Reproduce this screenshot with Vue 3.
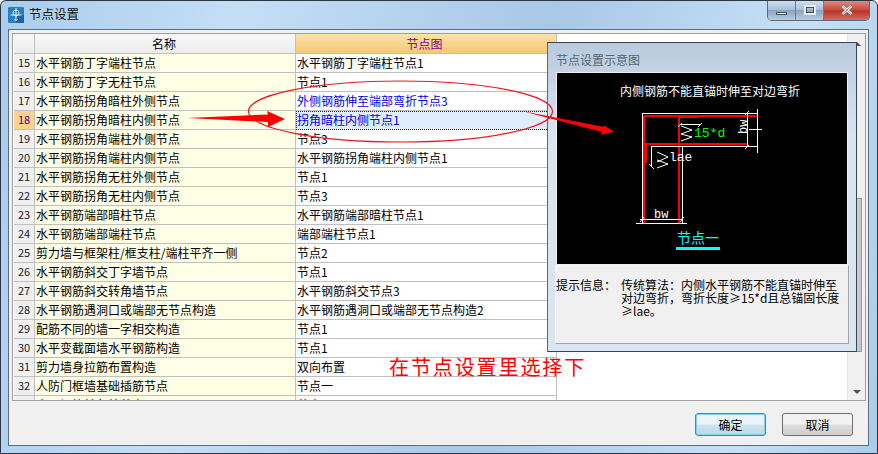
<template>
  <div class="window">
    <div class="titlebar">
      <svg class="logo" width="16" height="16" viewBox="0 0 16 16">
        <rect width="16" height="16" rx="1" fill="#2a7fc0" />
        <rect x="8" y="8" width="8" height="8" fill="#1c62a6" />
        <circle cx="8" cy="6" r="3" fill="none" stroke="#d8eefc" stroke-width="1" />
        <path d="M8 1v13M2.5 8h11M6 12l2 2 2-2" fill="none" stroke="#e8f6ff" stroke-width="1" />
      </svg>
      <span class="title">节点设置</span>
      <div class="controls">
        <div class="ctl"><i class="min"></i></div>
        <div class="ctl"><i class="max"></i></div>
        <div class="ctl close">
          <svg width="12" height="10" viewBox="0 0 12 10">
            <path d="M1.5 1l9 8M10.5 1l-9 8" stroke="#fff" stroke-width="2.6" />
            <path d="M1.5 1l9 8M10.5 1l-9 8" stroke="#5a6068" stroke-width=".6" />
          </svg>
        </div>
      </div>
    </div>

    <div class="client">
      <div class="grid">
        <div class="row head">
          <div class="num"></div>
          <div class="name">名称</div>
          <div class="node">节点图</div>
        </div>
        <div v-for="r in rows" :key="r.id" class="row" :class="{ current: r.sel }">
          <div class="num">{{ r.id }}</div>
          <div class="name">{{ r.name }}</div>
          <div class="node" :class="{ blue: r.blue }"><span>{{ r.node }}</span></div>
        </div>
        <div class="scrollbar">
          <i class="up"></i>
          <div class="thumb"></div>
          <i class="down"></i>
        </div>
      </div>
      <div class="footer">
        <button class="btn default">确定</button>
        <button class="btn">取消</button>
      </div>
    </div>

    <div class="panel">
      <div class="panel-title">节点设置示意图</div>
      <svg class="drawing" viewBox="557 72 290 191" width="290" height="191">
        <rect x="557" y="72" width="290" height="191" fill="#000" />
        <text x="710" y="95" class="cad-title" text-anchor="middle">内侧钢筋不能直锚时伸至对边弯折</text>
        <g stroke="#f00" fill="none" shape-rendering="crispEdges">
          <path d="M644 115H757M644 115V222M679 115V222M645 143H747" stroke-width="2" />
          <path d="M679 115.5H699" stroke-width="3" />
          <path d="M645 143V162" stroke-width="4" />
        </g>
        <g stroke="#fff" fill="none" stroke-width="1" shape-rendering="crispEdges">
          <path d="M642.5 112.5H757.5M642.5 112V223M636 222.5H687M651.5 145.5H757M682.5 145V222M757.5 108V152M747.5 112V146M640 218.5H683M651.5 145V165" />
          <path d="M680 123.5H700" />
          <path d="M749 128.5H762" />
        </g>
        <g stroke="#fff" fill="none" stroke-width="1">
          <path d="M678 126l4-4M698 126l4-4M745 114l4-4M745 148l4-4M640 221l4-5M680 221l4-5M649 163l5 5M657 151l11 5-11 5M657 159l11 4-11 4M681 125l11 4-11 4M681 133l11 3-11 4" />
        </g>
        <text x="694" y="136" class="cad green">15*d</text>
        <text x="669" y="160" class="cad">lae</text>
        <text x="654" y="217" class="cad small">bw</text>
        <text x="0" y="0" class="cad small" transform="translate(747 133) rotate(-90)">bw</text>
        <text x="677" y="242" class="cad-node">节点一</text>
        <rect x="676" y="246" width="44" height="3" fill="#0ff" />
      </svg>
      <div class="info">
        <div class="info-label">提示信息&#xFF1A;</div>
        <div class="info-text">传统算法&#xFF1A;内侧水平钢筋不能直锚时伸至<br />对边弯折&#xFF0C;弯折长度≥15*d且总锚固长度<br />≥lae。</div>
      </div>
    </div>

    <svg class="marks" width="878" height="454" viewBox="0 0 878 454">
      <ellipse cx="400.5" cy="111.5" rx="152" ry="30.5" fill="none" stroke="#f01820" stroke-width="1.2" />
      <path d="M187 118L268 114.5L267 111L285 119L268 127L268 122Z" fill="#f00" />
      <path d="M522 111L604 127L603 125L614 131.5L601 135L602 132Z" fill="#f00" />
    </svg>
    <div class="note">在节点设置里选择下</div>
  </div>
</template>

<script setup>
const rows = [
  { id: 15, name: '水平钢筋丁字端柱节点', node: '水平钢筋丁字端柱节点1' },
  { id: 16, name: '水平钢筋丁字无柱节点', node: '节点1' },
  { id: 17, name: '水平钢筋拐角暗柱外侧节点', node: '外侧钢筋伸至端部弯折节点3', blue: true },
  { id: 18, name: '水平钢筋拐角暗柱内侧节点', node: '拐角暗柱内侧节点1', blue: true, sel: true },
  { id: 19, name: '水平钢筋拐角端柱外侧节点', node: '节点3' },
  { id: 20, name: '水平钢筋拐角端柱内侧节点', node: '水平钢筋拐角端柱内侧节点1' },
  { id: 21, name: '水平钢筋拐角无柱外侧节点', node: '节点1' },
  { id: 22, name: '水平钢筋拐角无柱内侧节点', node: '节点3' },
  { id: 23, name: '水平钢筋端部暗柱节点', node: '水平钢筋端部暗柱节点1' },
  { id: 24, name: '水平钢筋端部端柱节点', node: '端部端柱节点1' },
  { id: 25, name: '剪力墙与框架柱/框支柱/端柱平齐一侧', node: '节点2' },
  { id: 26, name: '水平钢筋斜交丁字墙节点', node: '节点1' },
  { id: 27, name: '水平钢筋斜交转角墙节点', node: '水平钢筋斜交节点3' },
  { id: 28, name: '水平钢筋遇洞口或端部无节点构造', node: '水平钢筋遇洞口或端部无节点构造2' },
  { id: 29, name: '配筋不同的墙一字相交构造', node: '节点1' },
  { id: 30, name: '水平变截面墙水平钢筋构造', node: '节点1' },
  { id: 31, name: '剪力墙身拉筋布置构造', node: '双向布置' },
  { id: 32, name: '人防门框墙基础插筋节点', node: '节点一' },
  { id: 33, name: '水平钢筋转角处节点', node: '节点1' },
]
</script>

<style>
html, body { margin: 0; overflow: hidden; }
</style>

<style scoped>
.window {
  position: relative;
  width: 878px;
  height: 454px;
  box-sizing: border-box;
  padding: 0 8px 7px 7px;
  display: flex;
  flex-direction: column;
  border: 1px solid #2c3540;
  border-radius: 6px 6px 0 0;
  background: linear-gradient(100deg, #a9cdee 0%, #c4def5 25%, #a8c8e8 58%, #c6e0f6 85%, #a9cde8 100%);
  font-family: "Noto Sans CJK SC", sans-serif;
  font-size: 12px;
  color: #000;
  overflow: hidden;
}
.titlebar {
  height: 28px;
  flex: none;
  display: flex;
  align-items: center;
  gap: 5px;
}
.title { font-size: 12.5px; color: #111; padding-bottom: 4px; }
.controls {
  position: absolute;
  top: -1px;
  right: 7px;
  display: flex;
  height: 20px;
  border: 1px solid #5a6a7c;
  border-top: none;
  border-radius: 0 0 5px 5px;
  overflow: hidden;
}
.ctl {
  width: 27px;
  display: flex;
  align-items: center;
  justify-content: center;
  background: linear-gradient(#d3e3f2, #a9c0d8 48%, #8aa5c0 52%, #b7cee2);
  border-right: 1px solid #6c7e92;
}
.ctl .min { width: 11px; height: 3px; margin-top: 6px; background: #e8eef4; border: 1px solid #45525f; box-sizing: border-box; }
.ctl .max { width: 12px; height: 10px; border: 2px solid #e8eef4; outline: 1px solid #45525f; outline-offset: -3px; box-sizing: border-box; }
.ctl.close {
  width: 45px;
  border-right: none;
  background: linear-gradient(#d9958a, #c8493d 50%, #b53328 55%, #d07060);
}
.client {
  flex: 1;
  min-height: 0;
  display: flex;
  flex-direction: column;
  background: #f0f0f0;
  border: 1px solid #5f6e7e;
  padding: 3px 2px 0 3px;
}
.grid {
  position: relative;
  height: 368px;
  flex: none;
  box-sizing: border-box;
  border: 1px solid #a0a0a0;
  padding: 0 0 0 1px;
  background: #fff;
  overflow: hidden;
}
.row {
  display: flex;
  height: 19px;
  line-height: 17px;
  box-sizing: border-box;
}
.row > div {
  box-sizing: border-box;
  border-bottom: 1px solid #c0c0c0;
  border-right: 1px solid #c0c0c0;
  white-space: nowrap;
  overflow: hidden;
}
.num {
  width: 21px;
  text-align: center;
  background: #f0f0f0;
  color: #222;
  font-size: 11px;
}
.name {
  width: 261px;
  padding-left: 1px;
  background: #ffffe6;
}
.node {
  width: 261px;
  padding-left: 1px;
}
.head { height: 20px; line-height: 19px; }
.head .num, .head .name { background: linear-gradient(#f8f8f8, #ececec); }
.head .name { text-align: center; padding: 0 2px 0 0; }
.head .node {
  text-align: center;
  padding: 0 3px 0 0;
  color: #800080;
  background: linear-gradient(#fbe3a8, #f5c878);
}
.blue { color: #0000ee; }
.current .num { background: #fdd38b; color: #4a0080; }
.current .node {
  background: #deecfc;
  border: 1px dotted #222;
  padding-left: 0;
  line-height: 16px;
}
.scrollbar {
  position: absolute;
  top: 0;
  right: 0;
  bottom: 0;
  width: 17px;
  background: #f0f0f0;
  border-left: 1px solid #e4e4e4;
}
.scrollbar .up, .scrollbar .down {
  position: absolute;
  left: 5px;
  width: 0;
  height: 0;
  border-left: 4px solid transparent;
  border-right: 4px solid transparent;
}
.scrollbar .up { top: 8px; border-bottom: 4px solid #555; }
.scrollbar .down { bottom: 6px; border-top: 4px solid #555; }
.thumb {
  position: absolute;
  top: 164px;
  left: 1px;
  width: 13px;
  height: 154px;
  box-sizing: border-box;
  border: 1px solid #9a9a9a;
  background: linear-gradient(90deg, #d8d8d8, #c4c4c4);
}
.footer {
  flex: 1;
  display: flex;
  justify-content: flex-end;
  align-items: center;
  gap: 16px;
  padding: 2px 13px 0 0;
}
.btn {
  width: 71px;
  height: 23px;
  padding: 0;
  font: 12px "Noto Sans CJK SC", sans-serif;
  color: #000;
  border: 1px solid #707070;
  border-radius: 3px;
  background: linear-gradient(#f2f2f2 48%, #dcdcdc 52%, #cfcfcf);
}
.btn.default {
  border-color: #3c8cc0;
  box-shadow: inset 0 0 0 1px #7fd0f0;
  background: linear-gradient(#eaf4fa 48%, #cfe4f0 52%, #bcd8e8);
}
.panel {
  position: absolute;
  left: 546px;
  top: 41px;
  width: 310px;
  height: 310px;
  box-sizing: border-box;
  border: 1px solid #3a4654;
  border-left-color: #5a6878;
  padding: 0 7px 7px 7px;
  background: linear-gradient(#b9cade, #d8e4f1 30%, #d8e5f3);
  display: flex;
  flex-direction: column;
}
.panel-title {
  height: 30px;
  line-height: 34px;
  padding-left: 1px;
  color: #566473;
  flex: none;
}
.drawing {
  display: block;
  flex: none;
  margin-left: 2px;
  outline: 1px solid #f0f0f0;
}
.cad-title { fill: #fff; font-size: 12px; }
.cad { fill: #fff; font-family: "Liberation Mono", monospace; font-size: 13px; }
.small { font-size: 12px; }
.green { fill: #0f0; }
.cad-node { fill: #0ff; font-size: 14px; }
.info {
  flex: 1;
  margin-top: 1px;
  display: flex;
  background: #f0f0f0;
  border: 1px solid #f4f4f4;
  border-bottom-color: #a4a4a4;
  border-right-color: #a4a4a4;
  padding: 12px 0 0 0;
  line-height: 13px;
  white-space: nowrap;
}
.info-label { width: 65px; flex: none; }
.marks {
  position: absolute;
  left: -1px;
  top: -1px;
  pointer-events: none;
}
.note {
  position: absolute;
  left: 388px;
  top: 353px;
  color: #f00;
  font-size: 20px;
  letter-spacing: 1.9px;
  line-height: 26px;
  white-space: nowrap;
}
</style>
